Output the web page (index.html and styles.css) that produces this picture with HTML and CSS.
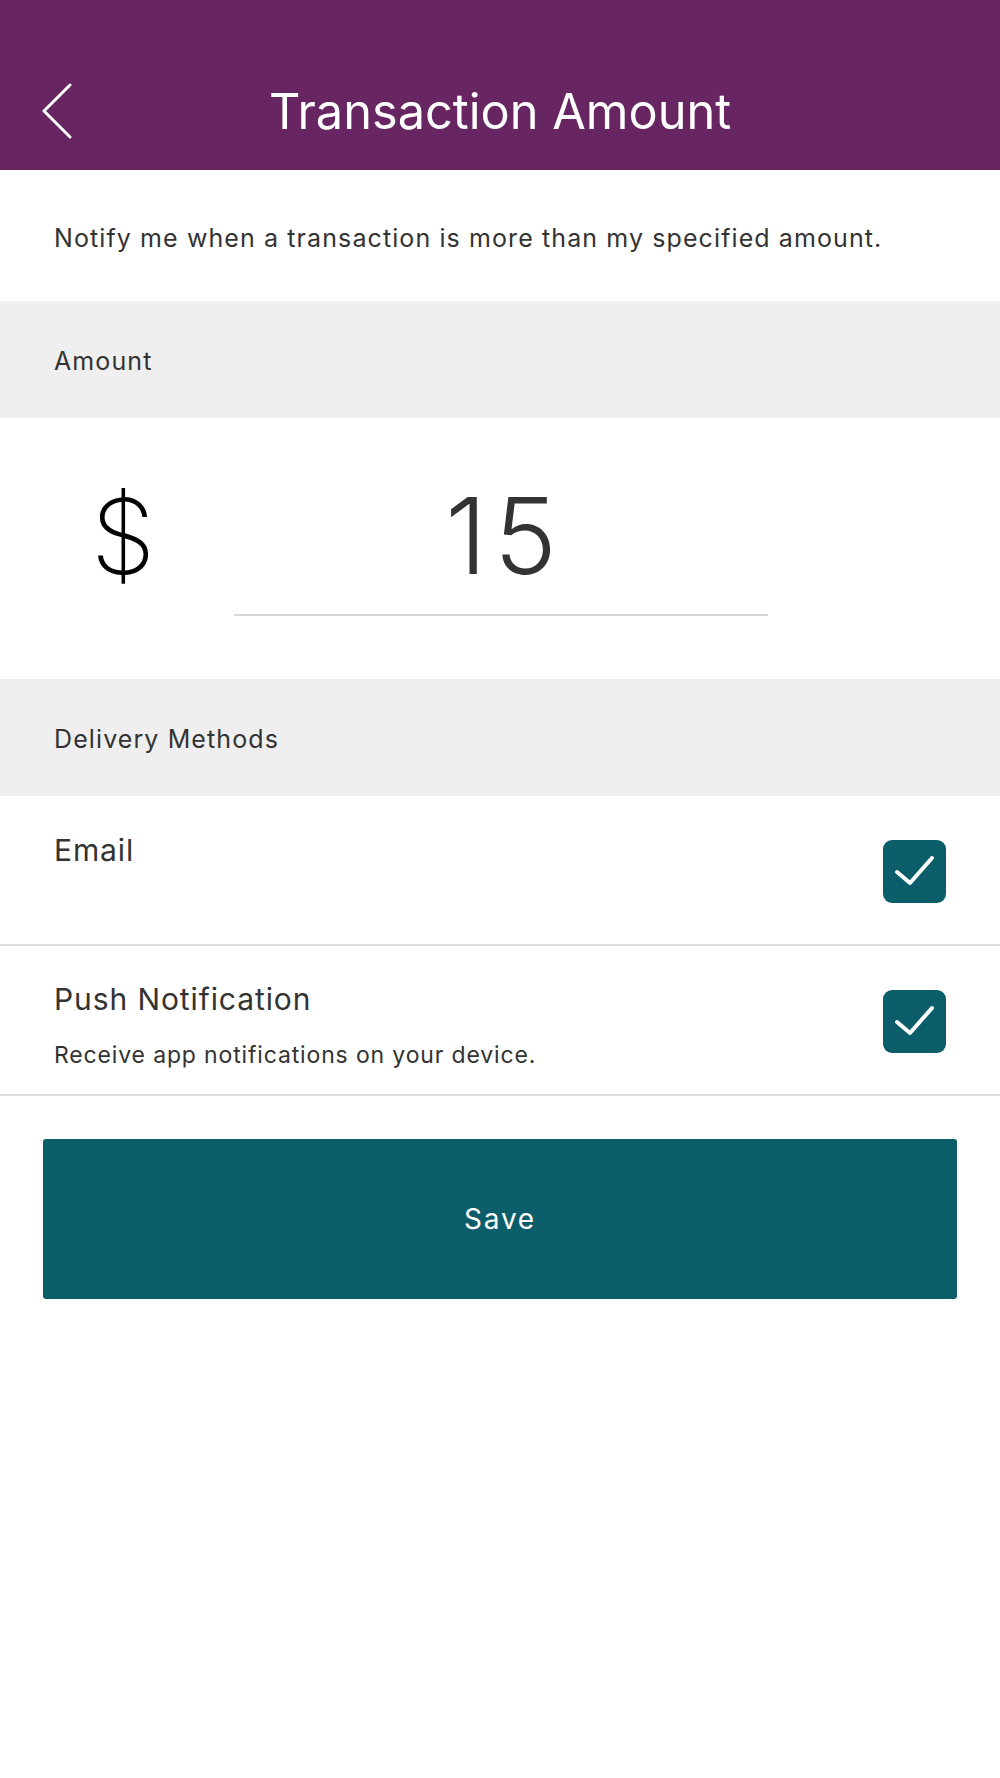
FILE: index.html
```html
<!DOCTYPE html>
<html lang="en">

<head>
  <meta charset="UTF-8">
  <meta name="viewport" content="width=device-width, initial-scale=1.0">
  <title>Transaction Amount</title>
  <link rel="stylesheet" href="styles.css">
</head>

<body>

  <header class="topbar">
    <button class="back-button" aria-label="Back">
      <svg width="34" height="56" viewBox="0 0 34 56">
        <path d="M29 2 L3 28 L29 54" fill="none" stroke="#fff" stroke-width="3" stroke-linecap="round" stroke-linejoin="round"/>
      </svg>
    </button>
    <h1 class="title">Transaction Amount</h1>
    <div></div>
  </header>

  <p class="intro">Notify me when a transaction is more than my specified amount.</p>

  <div class="section-label">Amount</div>

  <section class="amount">
    <div class="currency">$</div>
    <div class="amount-field">15</div>
  </section>

  <div class="section-label">Delivery Methods</div>

  <div class="method-row">
    <div class="method-text">
      <div class="method-name">Email</div>
    </div>
    <div class="checkbox checked">
      <svg width="63" height="62" viewBox="0 0 63 62">
        <path d="M14 32 L27 43 L49 18" fill="none" stroke="#fff" stroke-width="4" stroke-linecap="round" stroke-linejoin="round"/>
      </svg>
    </div>
  </div>

  <div class="method-row push">
    <div class="method-text">
      <div class="method-name">Push Notification</div>
      <div class="method-desc">Receive app notifications on your device.</div>
    </div>
    <div class="checkbox checked">
      <svg width="63" height="62" viewBox="0 0 63 62">
        <path d="M14 32 L27 43 L49 18" fill="none" stroke="#fff" stroke-width="4" stroke-linecap="round" stroke-linejoin="round"/>
      </svg>
    </div>
  </div>

  <div class="actions">
    <button class="save-button">Save</button>
  </div>

</body>

</html>
```

FILE: styles.css
```css
body {
  margin: 0;
  padding: 0;
  font-family: Inter, "Liberation Sans", sans-serif;
  color: #333333;
  background-color: #ffffff;
}

/* Purple title bar */
.topbar {
  height: 170px;
  box-sizing: border-box;
  padding-top: 52px;
  background-color: #672562;
  display: grid;
  grid-template-columns: 1fr auto 1fr;
  align-items: center;
}

.back-button {
  justify-self: start;
  margin-left: 41px;
  padding: 0;
  border: none;
  background: none;
  display: flex;
}

.title {
  margin: 0;
  color: #ffffff;
  font-size: 48.7px;
  font-weight: 400;
}

.intro {
  margin: 0;
  height: 131px;
  box-sizing: border-box;
  padding: 4px 54px 0 54px;
  display: flex;
  align-items: center;
  font-size: 25px;
  letter-spacing: 1.1px;
}

/* Grey section headers */
.section-label {
  height: 117px;
  box-sizing: border-box;
  padding: 3px 54px 0 54px;
  display: flex;
  align-items: center;
  background-color: #efefef;
  font-size: 25px;
  letter-spacing: 1.1px;
}

.amount {
  height: 261px;
  box-sizing: border-box;
  padding-top: 58px;
  display: flex;
  align-items: flex-start;
}

.currency {
  width: 246px;
  margin-right: -12px;
  text-align: center;
  font-size: 104px;
  font-weight: 250;
  line-height: 120px;
  color: #000000;
}

.amount-field {
  width: 534px;
  height: 140px;
  box-sizing: border-box;
  padding-left: 7px;
  border-bottom: 2px solid #d6d6d6;
  text-align: center;
  font-size: 106px;
  font-weight: 300;
  line-height: 120px;
  letter-spacing: 7px;
  color: #333333;
}

/* Delivery method rows */
.method-row {
  height: 150px;
  box-sizing: border-box;
  padding: 36px 54px 0 54px;
  border-bottom: 2px solid #dddddd;
  display: flex;
  justify-content: space-between;
  align-items: flex-start;
}

.method-row.push {
  padding-top: 35px;
}

.method-name {
  font-size: 30px;
  line-height: 36px;
  letter-spacing: 0.9px;
}

.method-desc {
  margin-top: 24px;
  font-size: 23px;
  line-height: 29px;
  letter-spacing: 0.85px;
}

.checkbox {
  width: 63px;
  height: 63px;
  margin-top: 8px;
  border-radius: 9px;
  background-color: #0b5e69;
  display: flex;
}

.push .checkbox {
  margin-top: 9px;
}

.actions {
  padding: 43px 43px 0 43px;
}

.save-button {
  width: 100%;
  height: 160px;
  border: none;
  border-radius: 3px;
  background-color: #0b5e69;
  color: #ffffff;
  font-family: Inter, "Liberation Sans", sans-serif;
  font-size: 28px;
  letter-spacing: 1.8px;
}
```
